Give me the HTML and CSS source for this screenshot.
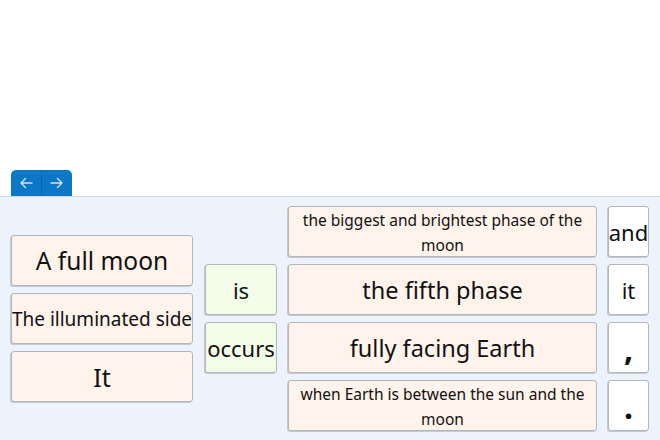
FILE: index.html
```html
<!DOCTYPE html>
<html>
<head>
<meta charset="utf-8">
<link rel="stylesheet" href="styles.css">
</head>
<body>
<div class="page">
  <div class="stage"></div>
  <div class="toolbar">
    <div class="tabs">
      <button class="tab-btn tab-left" aria-label="Previous">
        <svg width="14" height="12" viewBox="0 0 14 12"><path d="M13 6H2M6.5 1.5L2 6l4.5 4.5" fill="none" stroke="#cfe4f6" stroke-width="1.4" stroke-linecap="round" stroke-linejoin="round"/></svg>
      </button>
      <button class="tab-btn" aria-label="Next">
        <svg width="14" height="12" viewBox="0 0 14 12"><path d="M1 6h11M7.5 1.5L12 6l-4.5 4.5" fill="none" stroke="#cfe4f6" stroke-width="1.4" stroke-linecap="round" stroke-linejoin="round"/></svg>
      </button>
    </div>
  </div>
  <div class="panel">
    <div class="col col-1">
      <div class="card peach fs-big">A full moon</div>
      <div class="card peach fs-mid">The illuminated side</div>
      <div class="card peach fs-26">It</div>
    </div>
    <div class="col col-2">
      <div class="card green fs-24">is</div>
      <div class="card green fs-24">occurs</div>
    </div>
    <div class="col col-3">
      <div class="card peach fs-16">the biggest and brightest phase of the moon</div>
      <div class="card peach fs-phrase">the fifth phase</div>
      <div class="card peach fs-phrase">fully facing Earth</div>
      <div class="card peach fs-16">when Earth is between the sun and the moon</div>
    </div>
    <div class="col col-4">
      <div class="card white fs-24">and</div>
      <div class="card white fs-24">it</div>
      <div class="card white fs-punct">,</div>
      <div class="card white fs-punct">.</div>
    </div>
  </div>
</div>
</body>
</html>
```

FILE: styles.css
```css
html, body {
  margin: 0;
  padding: 0;
  background: #ffffff;
}
body {
  font-family: "Noto Sans", "DejaVu Sans", sans-serif;
  color: #111;
}
.page {
  height: 440px;
  display: flex;
  flex-direction: column;
  overflow: hidden;
}
.stage {
  height: 170px;
  flex: none;
}
.toolbar {
  height: 26px;
  padding-left: 11px;
  display: flex;
  align-items: flex-end;
  flex: none;
}
.tabs {
  display: flex;
  height: 26px;
  background: #0a77c7;
  border-radius: 5px 5px 0 0;
  overflow: hidden;
}
.tab-btn {
  width: 30px;
  height: 26px;
  border: 0;
  padding: 0;
  margin: 0;
  background: transparent;
  display: flex;
  align-items: center;
  justify-content: center;
}
.tab-left {
  width: 31px;
  border-right: 1px solid #0b67ad;
}
.panel {
  flex: 1;
  background: #ecf3fd;
  border-top: 1px solid #d3d9e0;
  padding: 9px 11px 0 11px;
  display: flex;
  align-items: flex-start;
}
.col {
  display: flex;
  flex-direction: column;
  gap: 7px;
}
.col-1 { width: 182px; margin-top: 29px; margin-right: 12px; }
.col-2 { width: 72px; margin-top: 58px; margin-right: 11px; }
.col-3 { width: 309px; margin-right: 11px; }
.col-4 { width: 41px; }
.card {
  box-sizing: border-box;
  height: 51px;
  border: 1px solid #b3b7bb;
  border-radius: 3px;
  box-shadow: -1px 1px 0 rgba(120, 125, 130, 0.35);
  display: flex;
  align-items: center;
  justify-content: center;
  text-align: center;
  overflow: hidden;
}
.peach { background: #fff3eb; }
.green { background: #f3fde9; }
.white { background: #ffffff; }
.fs-16 { font-size: 15.5px; line-height: 25px; padding: 2px 6px 0; }
.fs-mid { font-size: 19px; white-space: nowrap; }
.fs-24 { font-size: 22px; }
.fs-26 { font-size: 25px; }
.fs-big { font-size: 24.5px; }
.fs-phrase { font-size: 23.5px; }
.fs-punct { font-size: 32px; font-weight: 700; padding-top: 2px; }
```
